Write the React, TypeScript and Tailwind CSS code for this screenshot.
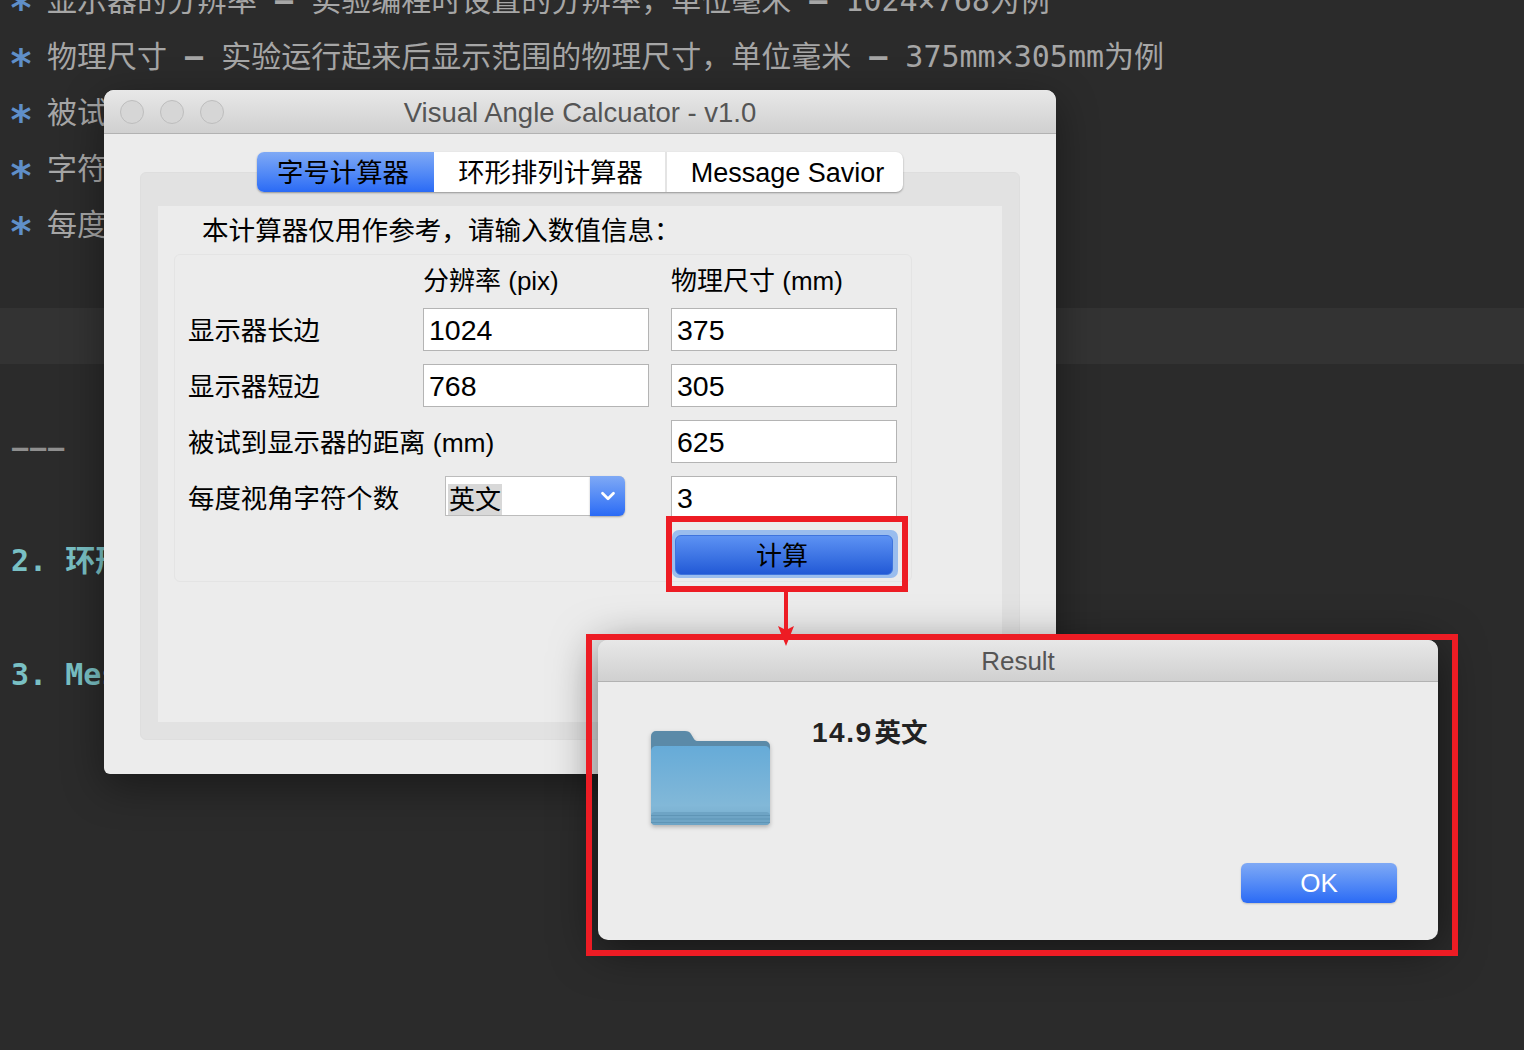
import React from 'react';
import { ChevronDown } from 'lucide-react';

const UI_FONT = "font-['Liberation_Sans','Noto_Sans_CJK_SC',sans-serif]";
const CODE_FONT = "font-['DejaVu_Sans_Mono','Noto_Sans_CJK_SC',monospace]";

const bullets = [
  ['显示器的分辨率 ', ' 实验编程时设置的分辨率，单位毫米 ', ' 1024×768为例'],
  ['物理尺寸 ', ' 实验运行起来后显示范围的物理尺寸，单位毫米 ', ' 375mm×305mm为例'],
  ['被试'],
  ['字符'],
  ['每度'],
];

const Field = ({ value }: { value: string }) => (
  <div className="h-[43px] bg-white border border-[#b4b4b4] pl-[5px] pt-[2px] flex items-center text-[28.5px] leading-none text-black">
    {value}
  </div>
);

const Editor = () => (
  <div className={`${CODE_FONT} text-[30px] text-[#a6a6a6] whitespace-pre`}>
    <div className="-mt-[28px]">
      {bullets.map((parts) => (
        <div key={parts[0]} className="h-14 pl-[11px] flex items-center">
          <span className="w-[36px] font-bold text-[#5f8fc9] text-[40px] leading-none pt-[15px] -ml-[2px] mr-[2px]">*</span>
          <span>
            {parts.map((part, i) => (
              <React.Fragment key={i}>
                {i > 0 && <span className="font-bold">–</span>}
                {part}
              </React.Fragment>
            ))}
          </span>
        </div>
      ))}
    </div>
    <div className="mt-14 h-14 bg-[#333333]" />
    <div className="mt-[58px] h-14 pl-[12px] pb-[3px] flex items-center font-bold text-[27px] tracking-[1.8px] text-[#8f8f8f]">–––</div>
    <div className="mt-[54px] h-14 pl-[11px] flex items-center font-bold text-[#79c0c4]">2. 环形排列计算器</div>
    <div className="mt-[58px] h-14 pl-[11px] flex items-center font-bold text-[#79c0c4]">3. Message Savior</div>
  </div>
);

const TrafficLight = () => (
  <span className="w-6 h-6 rounded-full border border-[#bdbdbd] bg-[#d6d6d6]" />
);

const Tabs = () => (
  <div className="relative z-10 ml-[153px] flex w-[646px] h-10 rounded-[7px] overflow-hidden bg-white shadow-[0_1px_2px_rgba(0,0,0,0.35)] text-[26.4px] text-black">
    <div className="w-[177px] pr-[5px] pt-[4px] flex items-center justify-center bg-gradient-to-b from-[#7fa9f5] to-[#2a6af5]">字号计算器</div>
    <div className="w-[233px] pl-[2px] pt-[4px] flex items-center justify-center border-r-2 border-[#e4e4e4]">环形排列计算器</div>
    <div className="flex-1 pl-[5px] pt-[2px] flex items-center justify-center text-[27px]">Message Savior</div>
  </div>
);

const CalculatorWindow = () => (
  <div className={`${UI_FONT} absolute left-[104px] top-[90px] w-[952px] h-[684px] bg-[#ececec] rounded-t-[10px] rounded-b-[6px] shadow-[0_12px_40px_rgba(0,0,0,0.4)] overflow-hidden`}>
    <div className="relative h-11 pt-[3px] flex items-center justify-center bg-gradient-to-b from-[#e8e8e8] to-[#d0d0d0] border-b border-[#b2b2b2] text-[27.5px] text-[#555555]">
      <div className="absolute left-[16px] top-[10px] flex gap-4">
        <TrafficLight />
        <TrafficLight />
        <TrafficLight />
      </div>
      Visual Angle Calcuator - v1.0
    </div>
    <div className="pt-[18px]">
      <Tabs />
      <div className="mx-9 -mt-5 h-[568px] rounded-[6px] border border-[#dedede] bg-[#e2e2e2] pt-[33px] px-[17px]">
        <div className="h-[516px] bg-[#ececec] text-black text-[26.4px]">
          <div className="h-12 pl-[44px] pt-[4px] flex items-center text-[26.6px]">本计算器仅用作参考，请输入数值信息：</div>
          <div className="ml-4 w-[738px] h-[328px] rounded-[6px] border border-[#e4e4e4] px-[13px]">
            <div className="grid grid-cols-[235px_226px_226px] pt-[7px] text-[26px]">
              <div className="h-[46px]" />
              <div className="h-[46px] pb-[8px] flex items-center">分辨率 (pix)</div>
              <div className="h-[46px] pb-[8px] flex items-center ml-[22px]">物理尺寸 (mm)</div>
            </div>
            <div className="grid grid-cols-[235px_226px_248px] gap-y-[13px]">
              <div className="h-[43px] pt-[4px] leading-none flex items-center">显示器长边</div>
              <Field value="1024" />
              <div className="pl-[22px]"><Field value="375" /></div>
              <div className="h-[43px] pt-[4px] leading-none flex items-center">显示器短边</div>
              <Field value="768" />
              <div className="pl-[22px]"><Field value="305" /></div>
              <div className="col-span-2 h-[43px] pt-[4px] leading-none flex items-center">被试到显示器的距离 (mm)</div>
              <div className="pl-[22px]"><Field value="625" /></div>
              <div className="col-span-2 flex items-center h-[43px] leading-none">
                <span className="w-[257px] pt-[4px]">每度视角字符个数</span>
                <div className="w-[180px] h-10 -mt-[3px] flex border border-[#bcbcbc] border-r-0 bg-white rounded-r-[6px]">
                  <div className="flex-1 flex items-end pl-[2px]">
                    <span className="bg-[#d8d8d8] w-[54px] h-[31px] flex items-center justify-center leading-none text-[26px]">英文</span>
                  </div>
                  <div className="w-[35px] -my-px flex items-center justify-center rounded-r-[6px] bg-gradient-to-b from-[#7fa9f5] to-[#2a6af5] shadow-[0_1px_2px_rgba(0,0,0,0.3)]">
                    <ChevronDown size={22} strokeWidth={3} color="#ffffff" />
                  </div>
                </div>
              </div>
              <div className="pl-[22px]"><Field value="3" /></div>
            </div>
            <div className="flex justify-end mt-[11px]">
              <div className="w-[226px] h-[48px] pl-[3px] pr-[5px] pt-[5px] pb-[3px] rounded-[7px] bg-[#9abdee]">
                <div className="h-10 pt-[2px] pr-[4px] rounded-[6px] flex items-center justify-center bg-gradient-to-b from-[#5d92f3] to-[#2259d6] border border-[#3f74dd] text-[26px] leading-none">计算</div>
              </div>
            </div>
          </div>
        </div>
      </div>
    </div>
  </div>
);

const FolderIcon = () => (
  <svg width="119" height="96" viewBox="0 0 119 96" className="drop-shadow-[0_2px_2px_rgba(0,0,0,0.25)]">
    <defs>
      <linearGradient id="folderFront" x1="0" y1="0" x2="0" y2="1">
        <stop offset="0" stopColor="#66abd8" />
        <stop offset="0.75" stopColor="#82b8d8" />
        <stop offset="0.85" stopColor="#7cb2d2" />
      </linearGradient>
    </defs>
    <path d="M0 6a5 5 0 0 1 5-5h29c3 0 5 1 6 3l3 5c1 1.500 2 2 4 2h67a5 5 0 0 1 5 5v20H0z" fill="#5b8aa8" />
    <rect x="0" y="16" width="119" height="79" rx="5" fill="url(#folderFront)" />
    <rect x="0" y="82" width="119" height="13" rx="4" fill="#6ea4c5" />
    <path d="M0 85.500h119M0 89h119M0 92.500h119" stroke="#5f95b6" strokeWidth="1" />
  </svg>
);

const ResultDialog = () => (
  <div className={`${UI_FONT} absolute left-[598px] top-[640px] w-[840px] h-[300px] flex flex-col bg-[#ececec] rounded-[10px] shadow-[0_8px_45px_rgba(0,0,0,0.55)] overflow-hidden`}>
    <div className="h-[42px] shrink-0 pt-[2px] flex items-center justify-center bg-gradient-to-b from-[#e8e8e8] to-[#d0d0d0] border-b border-[#b2b2b2] text-[26px] text-[#555555]">
      Result
    </div>
    <div className="flex-1 flex flex-col pl-[53px] pr-[41px]">
      <div className="flex">
        <div className="mt-[48px]"><FolderIcon /></div>
        <div className="ml-[42px] mt-[30px] flex items-baseline font-bold text-[#222222]">
          <span className="text-[28px] tracking-[1.5px] mr-[2px]">14.9</span>
          <span className="text-[26.5px]">英文</span>
        </div>
      </div>
      <div className="mt-auto mb-[37px] flex justify-end">
        <div className="w-[156px] h-10 pt-[1px] rounded-[6px] flex items-center justify-center bg-gradient-to-b from-[#7fa9f5] to-[#2a6af5] text-white text-[26px] shadow-[0_1px_2px_rgba(0,0,0,0.2)]">OK</div>
      </div>
    </div>
  </div>
);

// red markup drawn on top of the screenshot
const Annotations = () => (
  <>
    <div className="absolute left-[666px] top-[516px] w-[242px] h-[76px] border-[6px] border-[#ed1c24]" />
    <div className="absolute left-[586px] top-[634px] w-[872px] h-[322px] border-[6px] border-[#ed1c24]" />
    <svg className="absolute left-[776px] top-[586px]" width="20" height="62" viewBox="0 0 20 62">
      <path d="M10 0V48" stroke="#ed1c24" strokeWidth="4" />
      <path d="M2 40L10 44L18 40L10 60z" fill="#ed1c24" />
    </svg>
  </>
);

const App: React.FC = () => (
  <div className="relative h-[1050px] overflow-hidden bg-[#2b2b2b]">
    <Editor />
    <CalculatorWindow />
    <ResultDialog />
    <Annotations />
  </div>
);

export default App;
